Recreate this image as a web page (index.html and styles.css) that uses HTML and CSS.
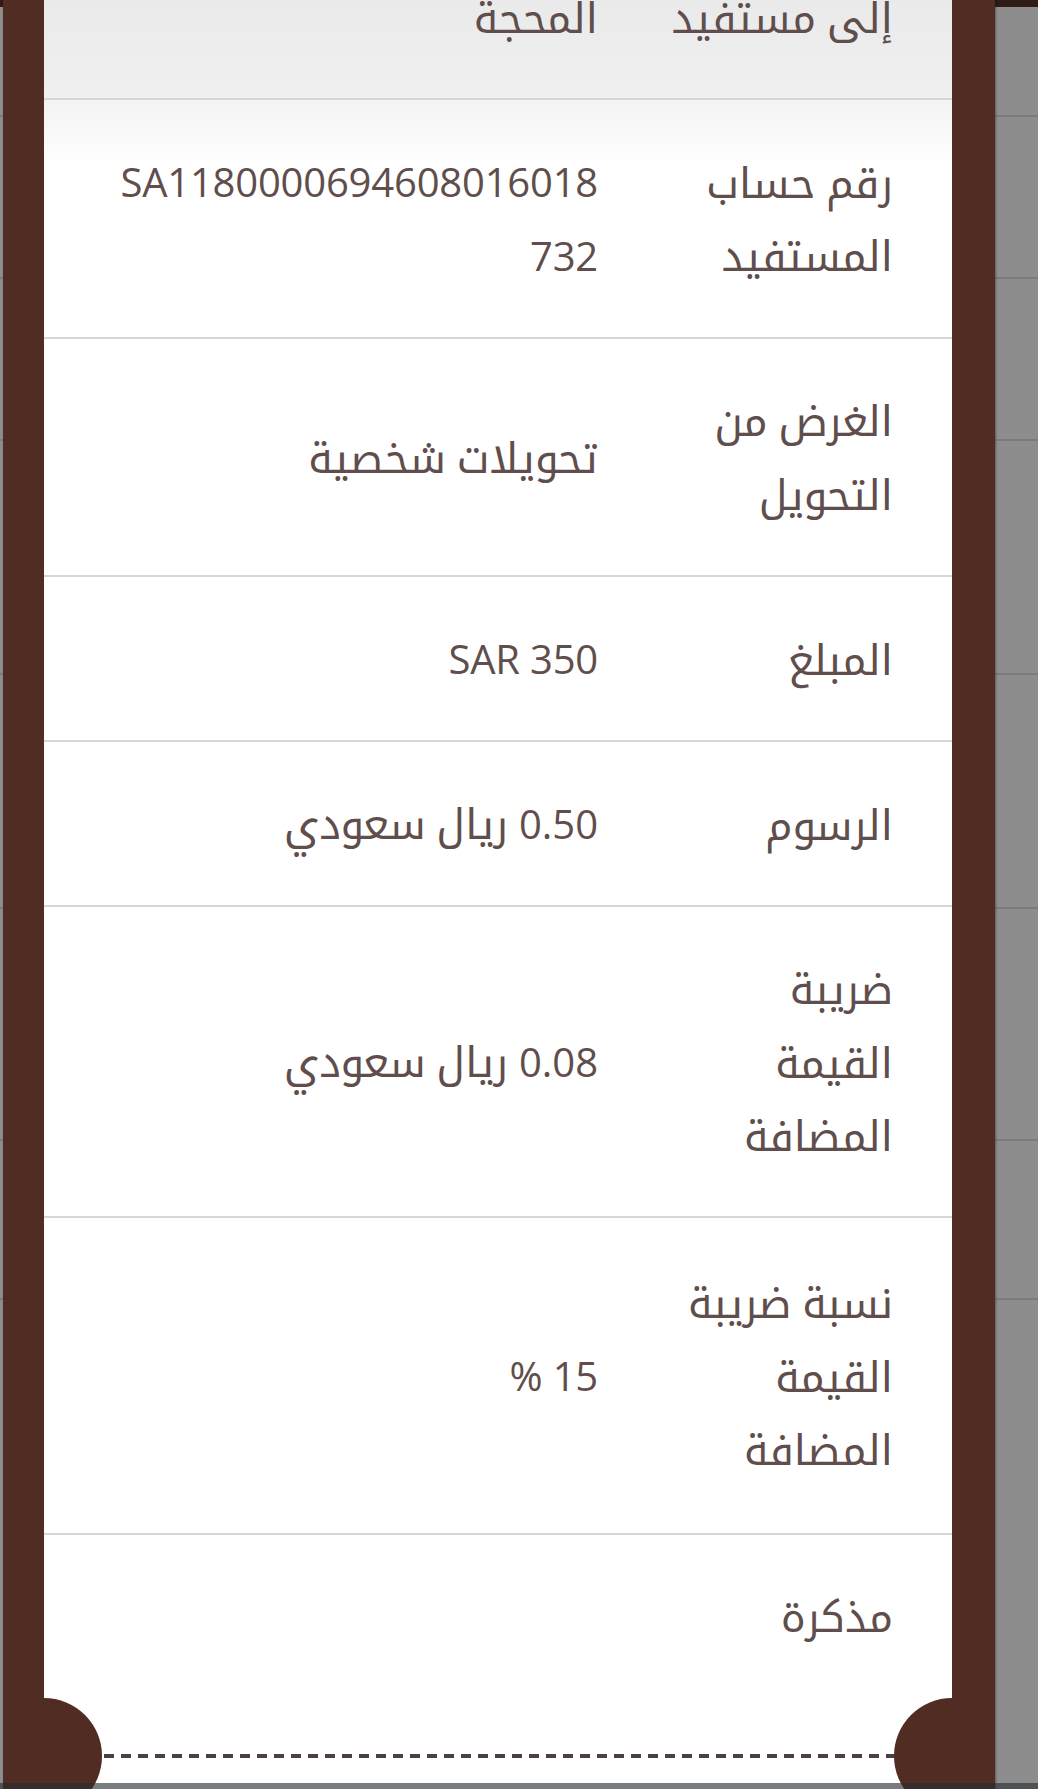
FILE: index.html
```html
<!DOCTYPE html>
<html lang="ar" dir="rtl">
<head>
<meta charset="utf-8">
<title>تفاصيل التحويل</title>
<link rel="stylesheet" href="styles.css">
</head>
<body>
<div class="screen">
  <div class="bg-list">
    <div class="bg-top"></div>
    <div class="bg-row h110"></div>
    <div class="bg-row h162"></div>
    <div class="bg-row h162"></div>
    <div class="bg-row h234"></div>
    <div class="bg-row h234"></div>
    <div class="bg-row h232"></div>
    <div class="bg-row h159"></div>
  </div>

  <div class="sheet">
    <div class="card">
      <div class="rows">
        <div class="row row-head">
          <div class="label">إلى مستفيد</div>
          <div class="value">المحجة</div>
        </div>
        <div class="row row-shade">
          <div class="label">رقم حساب<br>المستفيد</div>
          <div class="value"><span class="num">SA1180000694608016018<br>732</span></div>
        </div>
        <div class="row">
          <div class="label">الغرض من<br>التحويل</div>
          <div class="value">تحويلات شخصية</div>
        </div>
        <div class="row">
          <div class="label">المبلغ</div>
          <div class="value"><span class="num">SAR 350</span></div>
        </div>
        <div class="row">
          <div class="label">الرسوم</div>
          <div class="value"><span class="num">0.50</span> ريال سعودي</div>
        </div>
        <div class="row">
          <div class="label">ضريبة<br>القيمة<br>المضافة</div>
          <div class="value"><span class="num">0.08</span> ريال سعودي</div>
        </div>
        <div class="row row-tall">
          <div class="label">نسبة ضريبة<br>القيمة<br>المضافة</div>
          <div class="value"><span class="num">15 %</span></div>
        </div>
        <div class="row row-last">
          <div class="label">مذكرة</div>
          <div class="value"></div>
        </div>
      </div>
      <div class="tear"><div class="dash"></div></div>
    </div>
  </div>

  <div class="navbar"></div>
</div>
</body>
</html>
```

FILE: styles.css
```css
* { box-sizing: border-box; }

html, body {
  margin: 0;
  padding: 0;
}

body {
  width: 1038px;
  height: 1789px;
  overflow: hidden;
  font-family: "Open Sans", "Noto Kufi Arabic", "Noto Sans Arabic", "DejaVu Sans", sans-serif;
  color: #5f4e4c;
}

.screen {
  position: relative;
  width: 1038px;
  height: 1789px;
  overflow: hidden;
  background: #8d8d8d;
}

/* background list seen behind the sheet */
.bg-list {
  display: flex;
  flex-direction: column;
}
.bg-top {
  height: 7px;
  background: #2f1c16;
}
.bg-row {
  border-bottom: 2px solid #7b7b7b;
}
.h110 { height: 110px; }
.h162 { height: 162px; }
.h232 { height: 232px; }
.h234 { height: 234px; }
.h159 { height: 159px; }

/* brown sheet overlay */
.sheet {
  position: absolute;
  top: 0;
  bottom: 0;
  left: 3px;
  width: 992px;
  background: #502c23;
  padding: 0 43px 0 41px;
  box-shadow: 1px 0 2px rgba(0,0,0,0.35);
}

.card {
  height: 100%;
  background: #ffffff;
  overflow: hidden;
  display: flex;
  flex-direction: column;
}

.rows {
  margin-top: -64.5px;
  display: flex;
  flex-direction: column;
}

.row {
  display: grid;
  grid-template-columns: 295px 1fr;
  align-items: center;
  padding: 44.3px 59px 44.3px 40px;
  border-bottom: 2px solid #d6d6d6;
  font-size: 42px;
  line-height: 73.5px;
}
.row-tall {
  padding-top: 47.3px;
  padding-bottom: 47.3px;
}

.row-head {
  background: linear-gradient(#e6e6e6, #f0f0f0);
}
.row-shade {
  background: linear-gradient(#f3f3f3 0, #ffffff 70px);
}
.row-last {
  border-bottom: none;
}

.label {
  text-align: right;
  white-space: nowrap;
}
.value {
  text-align: right;
  white-space: nowrap;
}
.num {
  font-size: 40px;
  letter-spacing: -0.2px;
}

/* ticket tear line with notches */
.tear {
  position: relative;
  margin-top: 57px;
  height: 4px;
}
.dash {
  height: 4px;
  margin: 0 56px;
  background: repeating-linear-gradient(to left, #4b4141 0 10px, transparent 10px 17px);
}
.tear::before,
.tear::after {
  content: "";
  position: absolute;
  top: -56px;
  width: 116px;
  height: 116px;
  border-radius: 50%;
  background: #502c23;
}
.tear::before { right: -58px; }
.tear::after { left: -58px; }

.navbar {
  position: absolute;
  left: 0;
  right: 0;
  bottom: 0;
  height: 6px;
  background: rgba(40, 45, 50, 0.62);
}
```
